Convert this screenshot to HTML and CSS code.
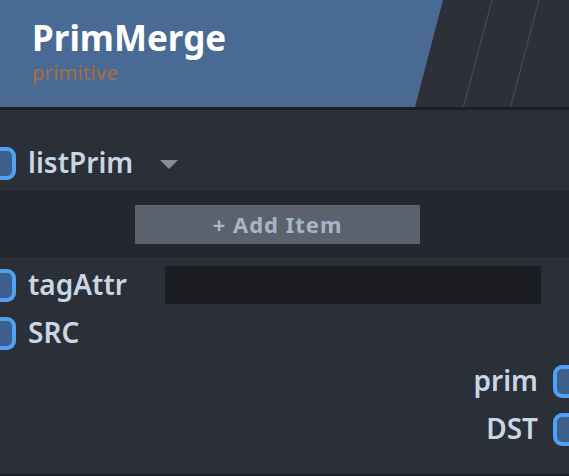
FILE: index.html
```html
<!DOCTYPE html>
<html>
<head>
<meta charset="utf-8">
<link rel="stylesheet" href="styles.css">
</head>
<body>
<div class="node">
  <div class="header">
    <svg class="header-bg" width="569" height="107" viewBox="0 0 569 107">
      <rect x="0" y="0" width="569" height="107" fill="#2d3039"/>
      <polygon points="0,0 443,0 415,107 0,107" fill="#4a6a96"/>
      <line x1="492" y1="0" x2="463.5" y2="107" stroke="#45484e" stroke-width="1.2"/>
      <line x1="539" y1="0" x2="510.5" y2="107" stroke="#45484e" stroke-width="1.2"/>
    </svg>
    <div class="title">PrimMerge</div>
    <div class="subtitle">primitive</div>
  </div>
  <div class="body">
    <div class="row row-list">
      <span class="socket socket-left"></span>
      <span class="label">listPrim</span>
      <span class="caret"></span>
    </div>
    <div class="band">
      <div class="add-btn">+ Add Item</div>
    </div>
    <div class="rows">
      <div class="row">
        <span class="socket socket-left"></span>
        <span class="label label-fixed">tagAttr</span>
        <span class="input"></span>
      </div>
      <div class="row">
        <span class="socket socket-left"></span>
        <span class="label">SRC</span>
      </div>
      <div class="row row-out">
        <span class="label">prim</span>
        <span class="socket socket-right"></span>
      </div>
      <div class="row row-out">
        <span class="label">DST</span>
        <span class="socket socket-right"></span>
      </div>
    </div>
  </div>
</div>
</body>
</html>
```

FILE: styles.css
```css
html, body {
  margin: 0;
  padding: 0;
  background: #2b2f37;
  overflow: hidden;
}
.node {
  width: 569px;
  height: 476px;
  overflow: hidden;
  font-family: "Noto Sans", "Open Sans", sans-serif;
  background: #2b2f37;
  border-bottom: 2px solid #1f2126;
  box-sizing: border-box;
}
.header {
  position: relative;
  height: 107px;
  border-bottom: 3px solid #1c1e22;
  padding-left: 32px;
  box-sizing: content-box;
}
.header-bg {
  position: absolute;
  left: 0;
  top: 0;
}
.title {
  position: relative;
  padding-top: 16px;
  font-size: 35px;
  font-weight: 700;
  line-height: 43px;
  color: #ffffff;
}
.subtitle {
  position: relative;
  font-size: 20px;
  line-height: 26px;
  color: #a86d3f;
  margin-top: 1px;
  letter-spacing: 0.3px;
}
.row {
  display: flex;
  align-items: center;
  height: 48px;
}
.row-list {
  height: 33px;
  padding: 37px 0 11px;
}
.socket {
  width: 33px;
  height: 33px;
  box-sizing: border-box;
  border: 4px solid #4ea2f6;
  background: #3e5f8c;
  border-radius: 9px;
  flex: none;
}
.socket-left {
  margin-left: -17px;
  margin-right: 12px;
}
.socket-right {
  margin-left: 15px;
  margin-right: -17px;
}
.label {
  font-size: 28px;
  font-weight: 600;
  color: #c8d6e6;
  line-height: 33px;
  position: relative;
  top: -1px;
}
.label-fixed {
  width: 137px;
  flex: none;
}
.caret {
  width: 0;
  height: 0;
  border-left: 9px solid transparent;
  border-right: 9px solid transparent;
  border-top: 9px solid #8a8d93;
  margin-left: 27px;
  margin-top: 2px;
}
.band {
  background: #24272e;
  height: 66px;
  padding-top: 14px;
  box-sizing: border-box;
}
.add-btn {
  margin-left: 135px;
  width: 285px;
  height: 39px;
  background: #5c626d;
  color: #a5b6cb;
  font-size: 22px;
  font-weight: 700;
  letter-spacing: 1px;
  line-height: 39px;
  text-align: center;
}
.rows {
  padding-top: 4px;
}
.input {
  width: 376px;
  height: 38px;
  background: #1b1d21;
  flex: none;
}
.row-out {
  justify-content: flex-end;
}
```
